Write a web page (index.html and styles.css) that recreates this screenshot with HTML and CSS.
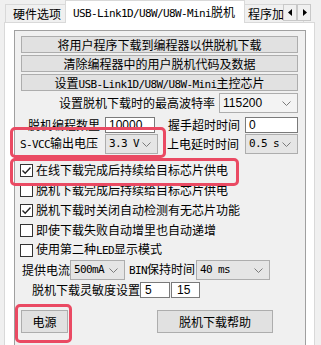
FILE: index.html
```html
<!DOCTYPE html>
<html>
<head>
<meta charset="utf-8">
<link rel="stylesheet" href="styles.css">
</head>
<body>
<div class="tabstrip">
  <div class="tab t1">硬件选项</div>
  <div class="tab sel"><span class="m">USB-Link1D/U8W/U8W-Mini</span>脱机</div>
  <div class="tab t3">程序加</div>
  <div class="scroller">
    <div class="sbtn"><svg width="5" height="7" viewBox="0 0 5 7"><path d="M4 0 L0 3.5 L4 7 Z" fill="#000"/></svg></div>
    <div class="sbtn"><svg width="5" height="7" viewBox="0 0 5 7"><path d="M1 0 L5 3.5 L1 7 Z" fill="#000"/></svg></div>
  </div>
</div>
<div class="page">
  <div class="box">
    <div class="btn wide">将用户程序下载到编程器以供脱机下载</div>
    <div class="btn wide">清除编程器中的用户脱机代码及数据</div>
    <div class="btn wide">设置<span class="m">USB-Link1D/U8W/U8W-Mini</span>主控芯片</div>

    <div class="row r-baud">
      <span class="lbl l-baud">设置脱机下载时的最高波特率</span>
      <div class="combo light c-baud"><span class="val sans">115200</span><svg class="chev" width="9" height="5" viewBox="0 0 9 5"><path d="M0.5 0.5 L4.5 4.5 L8.5 0.5" fill="none" stroke="#7a7a7a" stroke-width="1"/></svg></div>
    </div>

    <div class="row r-count">
      <span class="lbl l-count">脱机编程数里</span>
      <div class="input i-count sans">10000</div>
      <span class="lbl l-hand">握手超时时间</span>
      <div class="input i-hand sans">0</div>
    </div>

    <div class="row r-svcc">
      <span class="lbl l-svcc"><span class="m">S-VCC</span>输出电压</span>
      <div class="combo c-svcc"><span class="val m">3.3 V</span><svg class="chev" width="9" height="5" viewBox="0 0 9 5"><path d="M0.5 0.5 L4.5 4.5 L8.5 0.5" fill="none" stroke="#7a7a7a" stroke-width="1"/></svg></div>
      <span class="lbl l-delay">上电延时时间</span>
      <div class="combo c-delay"><span class="val m">0.5 s</span><svg class="chev" width="9" height="5" viewBox="0 0 9 5"><path d="M0.5 0.5 L4.5 4.5 L8.5 0.5" fill="none" stroke="#7a7a7a" stroke-width="1"/></svg></div>
    </div>

    <div class="checks">
      <div class="chk"><span class="cb on"><svg width="11" height="11" viewBox="0 0 11 11"><path d="M1.5 5.5 L4.2 8.2 L9.5 2.5" fill="none" stroke="#222" stroke-width="1.4"/></svg></span><span class="lbl">在线下载完成后持续给目标芯片供电</span></div>
      <div class="chk"><span class="cb"></span><span class="lbl">脱机下载完成后持续给目标芯片供电</span></div>
      <div class="chk"><span class="cb on"><svg width="11" height="11" viewBox="0 0 11 11"><path d="M1.5 5.5 L4.2 8.2 L9.5 2.5" fill="none" stroke="#222" stroke-width="1.4"/></svg></span><span class="lbl">脱机下载时关闭自动检测有无芯片功能</span></div>
      <div class="chk"><span class="cb"></span><span class="lbl">即使下载失败自动增里也自动递增</span></div>
      <div class="chk"><span class="cb"></span><span class="lbl">使用第二种<span class="m">LED</span>显示模式</span></div>
    </div>

    <div class="row r-cur">
      <span class="lbl l-cur">提供电流</span>
      <div class="combo c-cur"><span class="val m">500mA</span><svg class="chev" width="9" height="5" viewBox="0 0 9 5"><path d="M0.5 0.5 L4.5 4.5 L8.5 0.5" fill="none" stroke="#7a7a7a" stroke-width="1"/></svg></div>
      <span class="lbl l-bin"><span class="m">BIN</span>保持时间</span>
      <div class="combo c-bin"><span class="val m">40 ms</span><svg class="chev" width="9" height="5" viewBox="0 0 9 5"><path d="M0.5 0.5 L4.5 4.5 L8.5 0.5" fill="none" stroke="#7a7a7a" stroke-width="1"/></svg></div>
    </div>

    <div class="row r-sens">
      <span class="lbl l-sens">脱机下载灵敏度设置</span>
      <div class="input i-s1 sans">5</div>
      <div class="input i-s2 sans">15</div>
    </div>

    <div class="row r-bottom">
      <div class="btn b-power">电源</div>
      <div class="btn b-help">脱机下载帮助</div>
    </div>
  </div>
</div>

<div class="mark mk1"></div>
<div class="mark mk2"></div>
<div class="mark mk3"></div>
</body>
</html>
```
FILE: styles.css
```css
html, body {
  margin: 0;
  padding: 0;
}
body {
  width: 321px;
  height: 345px;
  overflow: hidden;
  position: relative;
  background: #f0f0f0;
  color: #000;
  font-family: "Noto Sans CJK SC", "Noto Sans", sans-serif;
  font-size: 12px;
  line-height: 16px;
}
.m {
  font-family: "DejaVu Sans Mono", "Liberation Mono", monospace;
  font-size: 11px;
  letter-spacing: -0.62px;
}
.sans {
  font-family: "Liberation Sans", Arial, sans-serif;
  font-size: 12px;
}

/* tabs */
.tabstrip {
  position: relative;
  height: 22px;
  display: flex;
  align-items: flex-end;
  padding-left: 5px;
}
.tab {
  box-sizing: border-box;
  height: 18px;
  line-height: 18px;
  border: 1px solid #d9d9d9;
  border-bottom: none;
  background: #f0f0f0;
  white-space: nowrap;
  overflow: hidden;
}
.t1 {
  width: 61px;
  padding-left: 7px;
}
.sel {
  position: relative;
  z-index: 2;
  width: 180px;
  height: 23px;
  margin-left: -1px;
  margin-bottom: -1px;
  padding-left: 7px;
  line-height: 22px;
  background: #fff;
  border-color: #d9d9d9;
}
.t3 {
  width: 60px;
  margin-left: -1px;
  padding-left: 3px;
}
.scroller {
  position: absolute;
  left: 283px;
  top: 4px;
  display: flex;
  z-index: 3;
}
.sbtn {
  box-sizing: border-box;
  width: 14px;
  height: 17px;
  border: 1px solid #c8c8c8;
  background: #f0f0f0;
  display: flex;
  align-items: center;
  justify-content: center;
}

/* page */
.page {
  box-sizing: border-box;
  margin-left: 4px;
  width: 311px;
  height: 323px;
  background: #fff;
  border: 1px solid #d9d9d9;
  border-bottom: none;
  padding: 7px 8px 0 9px;
}
.box {
  box-sizing: border-box;
  height: 316px;
  border: 1px solid #a0a0a0;
  border-bottom: none;
  background: #f0f0f0;
  padding: 5px 7px 0 6px;
}

.btn {
  box-sizing: border-box;
  border: 1px solid #adadad;
  background: #e1e1e1;
  text-align: center;
  white-space: nowrap;
}
.wide {
  height: 17px;
  line-height: 15px;
  margin-bottom: 2px;
}

.row {
  display: flex;
  align-items: center;
  white-space: nowrap;
}
.row > * {
  flex-shrink: 0;
}
.lbl {
  white-space: nowrap;
}

.combo {
  box-sizing: border-box;
  height: 20px;
  border: 1px solid #adadad;
  background: #e5e5e5;
  display: flex;
  align-items: center;
  justify-content: space-between;
  padding: 0 6px 0 3px;
}
.combo.light {
  background: #f3f3f3;
}
.chev {
  display: block;
}
.input {
  box-sizing: border-box;
  height: 16px;
  line-height: 14px;
  border: 1px solid #7a7a7a;
  background: #fff;
  padding-left: 3px;
}

/* baud */
.r-baud {
  height: 20px;
  margin-top: 1px;
}
.l-baud { margin-left: 38px; }
.c-baud { margin-left: 4px; width: 79px; }

/* count */
.r-count {
  height: 16px;
  margin-top: 4px;
}
.l-count { margin-left: 7px; }
.i-count { margin-left: 5px; width: 50px; }
.l-hand { margin-left: 13px; }
.i-hand { margin-left: 5px; width: 53px; }

/* svcc */
.r-svcc {
  height: 20px;
  margin-top: 1px;
}
.l-svcc { margin-left: -1px; }
.c-svcc { margin-left: 7px; width: 53px; }
.l-delay { margin-left: 9px; }
.c-delay { margin-left: 6px; width: 53px; }

/* checks */
.checks {
  margin-top: 6px;
}
.chk {
  height: 20px;
  display: flex;
  align-items: center;
}
.cb {
  box-sizing: border-box;
  width: 13px;
  height: 13px;
  margin-left: -1px;
  margin-right: 3px;
  border: 1px solid #333;
  background: #fff;
  display: flex;
  align-items: center;
  justify-content: center;
}

/* current */
.r-cur { height: 20px; }
.l-cur { margin-left: 1px; }
.c-cur { width: 55px; }
.l-bin { margin-left: 4px; }
.c-bin { margin-left: 1px; width: 74px; }

/* sensitivity */
.r-sens {
  height: 16px;
  margin-top: 2px;
}
.l-sens { margin-left: 11px; }
.i-s1 { width: 30px; padding-left: 4px; }
.i-s2 { margin-left: 1px; width: 29px; padding-left: 5px; }

/* bottom buttons */
.r-bottom {
  margin-top: 12px;
}
.b-power {
  width: 47px;
  height: 23px;
  line-height: 21px;
}
.b-help {
  margin-left: 89px;
  width: 116px;
  height: 23px;
  line-height: 21px;
}

/* red annotation marks (overlay) */
.mark {
  position: absolute;
  box-sizing: border-box;
  border: 3px solid #ea4a63;
  border-radius: 5px;
  z-index: 10;
}
.mk1 { left: 10px; top: 127px; width: 156px; height: 31px; }
.mk2 { left: 10px; top: 158px; width: 229px; height: 28px; }
.mk3 { left: 15px; top: 304px; width: 57px; height: 39px; }
```
